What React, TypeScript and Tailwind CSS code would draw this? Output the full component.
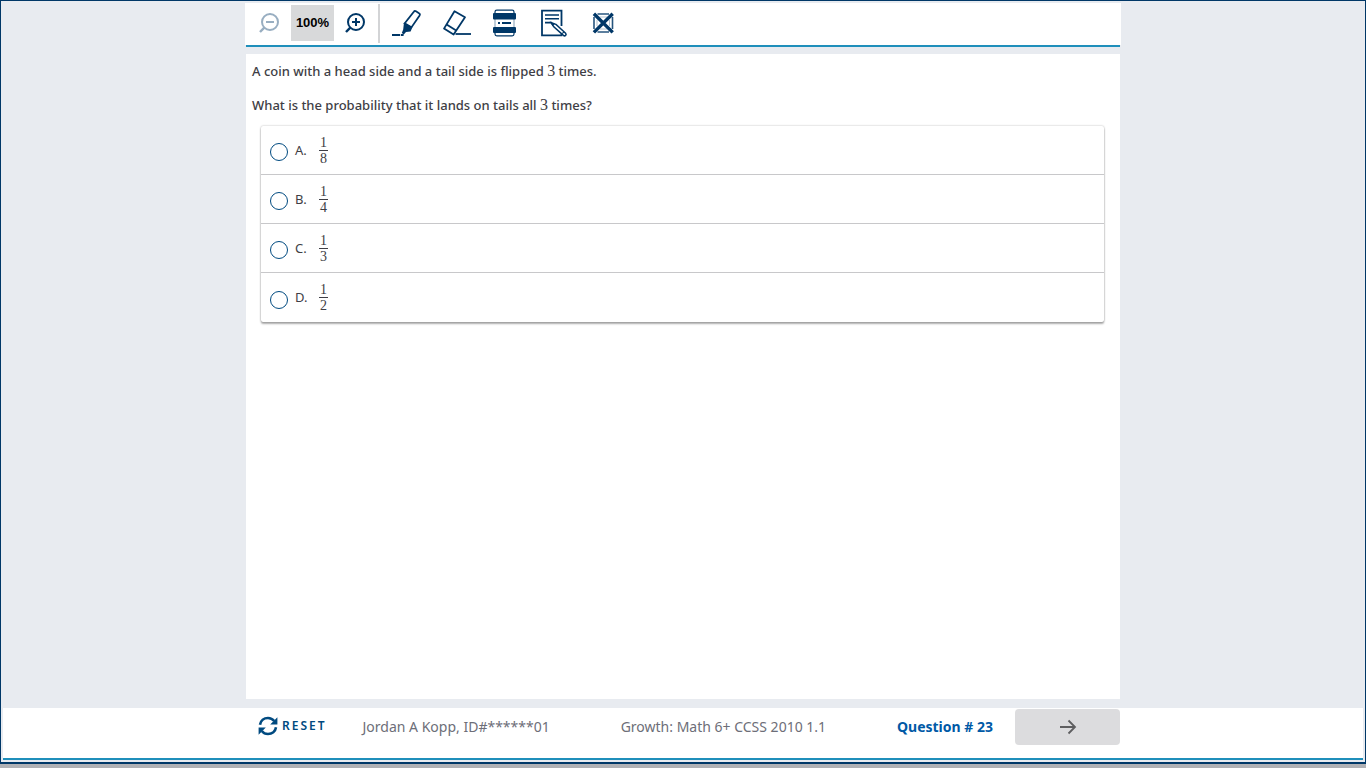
import React from "react";

const choices = [
  { letter: "A", top: "1", bottom: "8" },
  { letter: "B", top: "1", bottom: "4" },
  { letter: "C", top: "1", bottom: "3" },
  { letter: "D", top: "1", bottom: "2" },
];

function Magnifier({ sign }: { sign: "plus" | "minus" }) {
  return (
    <svg width="22" height="22" viewBox="0 0 22 22" fill="none" stroke="currentColor" strokeWidth="2" aria-hidden="true">
      <circle cx="12" cy="10" r="8" />
      <path d="M6.3 15.7 2 20" strokeWidth="2.4" />
      <path d={sign === "plus" ? "M8 10h8M12 6v8" : "M8 10h8"} />
    </svg>
  );
}

function HighlighterIcon() {
  return (
    <svg width="33" height="32" viewBox="0 0 33 32" fill="none" stroke="currentColor" strokeWidth="1.8" aria-hidden="true">
      <path d="M23.8 4.8Q24.6 3.6 26 4.3L29 6.2Q30.4 7 29.6 8.4L21.4 20.4 14.6 16.4Z" />
      <path d="M14 15.4 22.4 20.2 20.6 24.4 16 25 13.8 27.6 11.8 26 13.2 22.6Z" fill="currentColor" stroke="none" />
      <path d="M2 28h8M10.8 28h2.8" />
    </svg>
  );
}

function EraserIcon() {
  return (
    <svg width="33" height="32" viewBox="0 0 33 32" fill="none" stroke="currentColor" strokeWidth="1.8" strokeLinejoin="round" aria-hidden="true">
      <path d="M15.5 4.2 26 10.2 14.6 27.6 5 21.6Z" />
      <path d="M7.6 17.4 17.2 23.4" />
      <path d="M16.5 27H32" />
    </svg>
  );
}

function LineReaderIcon() {
  return (
    <svg width="33" height="32" viewBox="0 0 33 32" fill="none" stroke="currentColor" aria-hidden="true">
      <path d="M7 6V5Q7 3.2 8.8 3.2H24.2Q26 3.2 26 5V6M7 26v1Q7 28.8 8.8 28.8H24.2Q26 28.8 26 27V26" strokeWidth="1.2" />
      <path d="M7 12v8M26 12v8" strokeWidth="1" opacity="0.5" />
      <rect x="5" y="6" width="23" height="6.5" rx="1" fill="currentColor" stroke="none" />
      <rect x="5" y="20" width="23" height="6" rx="1" fill="currentColor" stroke="none" />
      <path d="M10 16h2M14 16h9" strokeWidth="2" />
    </svg>
  );
}

function NotepadIcon() {
  return (
    <svg width="33" height="32" viewBox="0 0 33 32" fill="none" stroke="currentColor" strokeWidth="1.8" aria-hidden="true">
      <path d="M24.5 19V3.6H5V28.4H24.5V27" />
      <path d="M8 8h14M8 11.8h14M8 15.6h7" strokeWidth="1.6" />
      <path d="M14.6 16.2 19 17.4 28.6 26.2Q29.6 27.4 28.6 28.4 27.6 29.4 26.4 28.4L16.8 19.8Z" fill="white" strokeWidth="1.5" />
      <path d="M14 15.5 17 16.6 15.6 18.2ZM25.2 26.6 27 24.8" fill="currentColor" strokeWidth="1.2" />
    </svg>
  );
}

function EliminatorIcon() {
  return (
    <svg width="33" height="32" viewBox="0 0 33 32" fill="none" stroke="currentColor" aria-hidden="true">
      <path d="M8 10V22M26.5 10V22M11.5 7H23M11.5 25H23" strokeWidth="1.6" opacity="0.85" />
      <path d="M13.5 10H21M13.5 22H21M11 13V19M23.5 13V19" strokeWidth="1" opacity="0.3" />
      <path d="M7.9 6.8 26.7 25.4M26.7 6.8 7.9 25.4" strokeWidth="3.4" />
    </svg>
  );
}

function ResetIcon() {
  return (
    <svg width="20" height="20" viewBox="0 0 20 20" fill="none" stroke="currentColor" strokeWidth="2.6" aria-hidden="true">
      <path d="M2 8.8C2.6 4.6 6 2 10 2c2.6 0 4.8 1.2 6.2 3" />
      <path d="M18 11.2C17.4 15.4 14 18 10 18c-2.6 0-4.8-1.2-6.2-3" />
      <path d="M19.4 1.2V8.4H12.2ZM.6 18.8V11.6H7.8Z" fill="currentColor" stroke="none" />
    </svg>
  );
}

const tools = [
  { label: "Highlighter", icon: <HighlighterIcon /> },
  { label: "Eraser", icon: <EraserIcon /> },
  { label: "Line reader", icon: <LineReaderIcon /> },
  { label: "Notepad", icon: <NotepadIcon /> },
  { label: "Answer eliminator", icon: <EliminatorIcon /> },
];

function MathNumber({ children }: { children: React.ReactNode }) {
  return <span className="font-['Liberation_Serif',serif] text-base leading-4 font-normal">{children}</span>;
}

function Toolbar() {
  return (
    <header>
      <div className="flex h-[42px] items-start bg-white pt-px text-[#003767]">
        <button type="button" disabled aria-label="Zoom out" className="flex h-[38px] w-[46px] items-center justify-center pl-0.5 opacity-40">
          <Magnifier sign="minus" />
        </button>
        <output className="mt-px flex h-9 w-[43px] items-center justify-center bg-[#d8d9da] font-['Liberation_Sans',sans-serif] text-[13px] font-bold text-black">
          100%
        </output>
        <button type="button" aria-label="Zoom in" className="flex h-[38px] w-[42px] items-center justify-center">
          <Magnifier sign="plus" />
        </button>
        <div className="mr-0.5 ml-0.5 h-[39px] w-0.5 bg-[#d3d4d6]" />
        {tools.map((tool) => (
          <button key={tool.label} type="button" aria-label={tool.label} className="flex h-[38px] w-[49px] items-center justify-center">
            {tool.icon}
          </button>
        ))}
      </div>
      <div className="mx-px h-0.5 bg-[#1f8fbb]" />
    </header>
  );
}

function Question() {
  return (
    <main className="mx-px mt-[7px] mb-[9px] flex-1 bg-white px-1.5 pt-[7px] text-[13px] text-[#3e3e45]">
      <p className="leading-5 font-medium">
        A coin with a head side and a tail side is flipped <MathNumber>3</MathNumber> times.
      </p>
      <p className="mt-3.5 leading-5 font-medium">
        What is the probability that it lands on tails all <MathNumber>3</MathNumber> times?
      </p>
      <fieldset
        aria-label="Answer choices"
        className="mt-[11px] mr-2.5 ml-[9px] rounded-xs shadow-[0_2px_2px_#00000050,0_0_2px_#00000050]"
      >
        {choices.map((choice) => (
          <label key={choice.letter} className="flex h-[49px] items-center border-b border-[#c8c8ca] pl-[9px] last:border-b-0">
            <input type="radio" name="answer" className="mt-1 size-[18px] appearance-none rounded-full border border-[#004a80] bg-white checked:border-[5px]" />
            <span className="mt-px ml-[7px] w-6">{choice.letter}.</span>
            <span className="flex w-[9px] flex-col items-center font-['Liberation_Serif',serif] text-sm leading-[15px]">
              <span>{choice.top}</span>
              <span className="h-px w-full bg-[#3e3e45]" />
              <span>{choice.bottom}</span>
            </span>
          </label>
        ))}
      </fieldset>
    </main>
  );
}

function Footer() {
  return (
    <footer className="h-[52px] border-b-2 border-[#1f8fbb] bg-white">
      <div className="mx-auto flex w-full max-w-[874px] items-center pt-px text-sm leading-5 text-[#6d6e78]">
        <button type="button" className="ml-3 flex items-center gap-1 pb-0.5 text-xs font-semibold tracking-[2px] text-[#004a80]">
          <ResetIcon />
          RESET
        </button>
        <span className="ml-9">Jordan A Kopp, ID#******01</span>
        <span className="mx-auto">Growth: Math 6+ CCSS 2010 1.1</span>
        <span className="font-bold text-[#0059a6]">Question # 23</span>
        <button type="button" aria-label="Next question" className="ml-[22px] flex h-9 w-[105px] items-center justify-center rounded bg-[#dcdcde] text-[#5e5e60]">
          <svg width="18" height="16" viewBox="0 0 18 16" fill="none" stroke="currentColor" strokeWidth="1.8" aria-hidden="true">
            <path d="M1 8H16M9.5 1.5 16 8 9.5 14.5" />
          </svg>
        </button>
      </div>
    </footer>
  );
}

export default function App() {
  return (
    <div className="min-h-screen bg-[#b0b1b5] pb-1 font-['Noto_Sans','Open_Sans',sans-serif]">
      <div className="flex min-h-[calc(100vh-4px)] flex-col border border-b-2 border-[#003767] bg-[#e8ebf0] p-0.5">
        <div className="mx-auto flex w-full max-w-[876px] flex-1 flex-col">
          <Toolbar />
          <Question />
        </div>
        <Footer />
      </div>
    </div>
  );
}
